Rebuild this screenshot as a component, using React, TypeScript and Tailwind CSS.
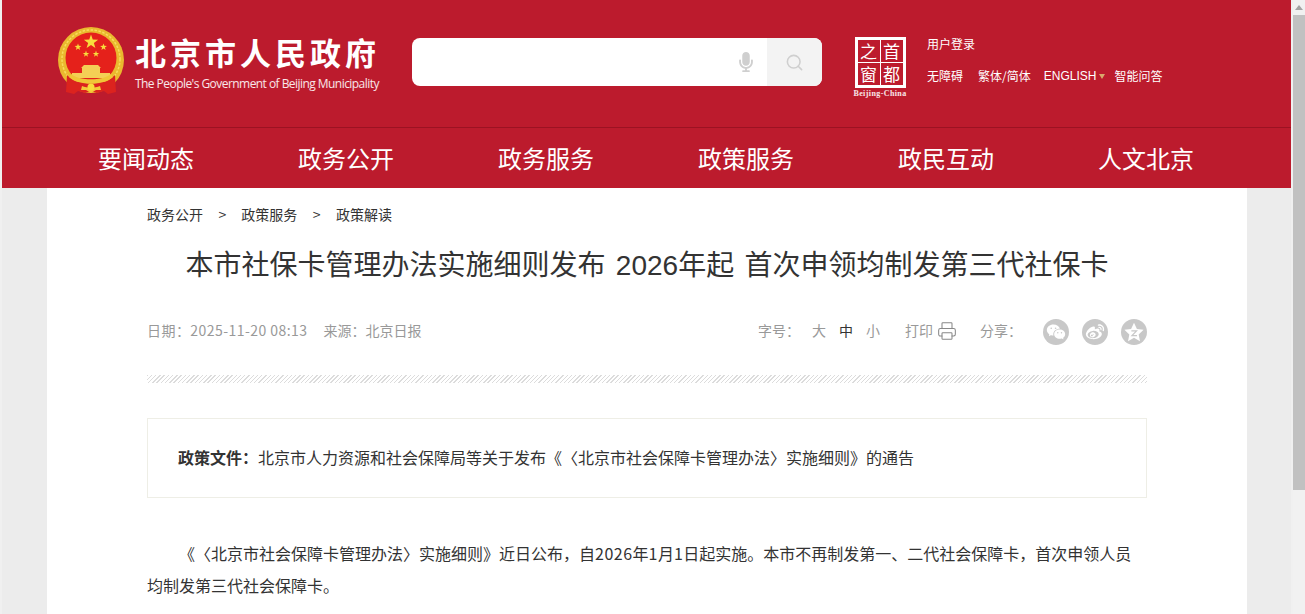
import type { ReactNode } from 'react';
import { Printer, Search } from 'lucide-react';
import { FaMicrophone } from 'react-icons/fa';
import { RiWechatFill, RiWeiboFill } from 'react-icons/ri';

const nav = ['要闻动态', '政务公开', '政务服务', '政策服务', '政民互动', '人文北京'];

function starPoints(cx: number, cy: number, r: number) {
  const pts: string[] = [];
  for (let i = 0; i < 10; i++) {
    const a = (Math.PI / 5) * i - Math.PI / 2;
    const d = i % 2 === 0 ? r : r * 0.4;
    pts.push(`${cx + d * Math.cos(a)},${cy + d * Math.sin(a)}`);
  }
  return pts.join(' ');
}

function Emblem() {
  return (
    <svg width="66" height="70" viewBox="0 0 66 70" className="shrink-0">
      <circle cx="33" cy="33" r="33" fill="#eab92e" />
      <circle cx="33" cy="32" r="29" fill="none" stroke="#f7dc5c" strokeWidth="1.5" strokeDasharray="2.5 1.5" />
      <circle cx="33" cy="31" r="25.5" fill="#e5211b" />
      <polygon points={starPoints(33, 15, 7.5)} fill="#f8dc3c" />
      <polygon points={starPoints(20, 20, 3.6)} fill="#f8dc3c" />
      <polygon points={starPoints(45.5, 20, 3.6)} fill="#f8dc3c" />
      <polygon points={starPoints(28, 27, 3.4)} fill="#f8dc3c" />
      <polygon points={starPoints(38, 27, 3.4)} fill="#f8dc3c" />
      <path d="M26 38h14l3 3H23z M24 41h18v5H24z M14 46h38v5H14z" fill="#f4cf55" />
      <path d="M9 48c3 3 7 6 11 7h26c4-1 8-4 11-7l1 17-8 2-4-3-7 2-6-2-6 2-7-2-4 3-8-2z" fill="#dc231e" />
      <path d="M13 47c8 7 32 7 40 0l2 3c-9 9-35 9-44 0z" fill="#f0c637" />
      <path d="M24 59c5 2 13 2 18 0l1 4-5 0-5 3-5-3-5 0z" fill="#f3c93a" />
      <circle cx="33" cy="60" r="3.5" fill="#f8dc3c" />
    </svg>
  );
}

function CapitalLogo() {
  return (
    <div className="flex flex-col items-center w-[56px] shrink-0">
      <div className="w-[51px] h-[51px] border-[3px] border-white grid grid-cols-2 grid-rows-2 gap-[1px] bg-white">
        {['之', '首', '窗', '都'].map((c) => (
          <span key={c} className="bg-[#bc1b2d] text-white text-[17px] leading-[22px] text-center">
            {c}
          </span>
        ))}
      </div>
      <span className="mt-[1px] text-[8px] leading-[9px] font-bold tracking-[0.4px] text-white/90 font-['Liberation_Serif',serif] whitespace-nowrap">
        Beijing-China
      </span>
    </div>
  );
}

function QzoneIcon() {
  return (
    <svg width="20" height="20" viewBox="0 0 24 24">
      <polygon points="12,1 15.5,8.4 23.5,9.4 17.6,14.9 19.2,23 12,19 4.8,23 6.4,14.9 0.5,9.4 8.5,8.4" fill="#fff" />
      <path d="M8.8 10.6h6.2l-5.4 5.6h6" fill="none" stroke="#c8c8c8" strokeWidth="1.5" />
    </svg>
  );
}

function ShareCircle({ children }: { children: ReactNode }) {
  return <span className="w-[26px] h-[26px] rounded-full bg-[#c8c8c8] flex items-center justify-center text-white">{children}</span>;
}

export default function App() {
  return (
    <div className="flex w-[1305px] h-[614px] overflow-hidden bg-[#f0f0f0] [text-spacing-trim:space-all] font-['Noto_Sans_CJK_SC','Liberation_Sans',sans-serif]">
      <div className="w-[1289px] ml-[2px] h-[614px] bg-[#ececec] shrink-0">
        <header className="bg-[#bc1b2d] text-white">
          <div className="h-[127px] flex items-start">
            <div className="ml-[56px] mt-[27px]">
              <Emblem />
            </div>
            <div className="ml-[11px] mt-[31px] w-[254px]">
              <div className="text-[31px] leading-[42px] font-bold tracking-[4px] whitespace-nowrap">北京市人民政府</div>
              <div className="text-[12px] leading-[18px] mt-[2px] whitespace-nowrap font-['Open_Sans','Liberation_Sans',sans-serif] tracking-[-0.55px] text-white/90">
                The People's Government of Beijing Municipality
              </div>
            </div>
            <div className="ml-[23px] mt-[38px] w-[410px] h-[48px] rounded-[8px] bg-white overflow-hidden flex justify-end">
              <div className="w-[42px] flex items-center justify-center text-[#cfcfcf]">
                <FaMicrophone size={20} />
              </div>
              <div className="w-[55px] bg-[#f3f3f3] flex items-center justify-center text-[#cfcfcf]">
                <Search size={19} strokeWidth={2} />
              </div>
            </div>
            <div className="ml-[30px] mt-[37px]">
              <CapitalLogo />
            </div>
            <div className="ml-[19px] mt-[35px] text-[12px] leading-[18px]">
              <div>用户登录</div>
              <div className="flex items-center mt-[14px] whitespace-nowrap">
                <span>无障碍</span>
                <span className="ml-[15px]">繁体/简体</span>
                <span className="ml-[13px] font-['Liberation_Sans',sans-serif]">ENGLISH</span>
                <span className="ml-[3px] w-0 h-0 border-x-[3px] border-x-transparent border-t-[5px] border-t-[#d9a86c]"></span>
                <span className="ml-[9px]">智能问答</span>
              </div>
            </div>
          </div>
          <nav className="h-[61px] border-t border-[#9c1222] flex items-center pl-[44px]">
            {nav.map((item) => (
              <a key={item} className="w-[200px] text-center text-[24px] leading-[60px]">
                {item}
              </a>
            ))}
          </nav>
        </header>
        <main className="ml-[45px] w-[1200px] h-[426px] bg-white px-[100px]">
          <div className="pt-[16px] flex items-center text-[14px] leading-[20px] text-[#333]">
            <span>政务公开</span>
            <span className="ml-[15.5px] mr-[15px]">&gt;</span>
            <span>政策服务</span>
            <span className="ml-[15.5px] mr-[15.5px]">&gt;</span>
            <span>政策解读</span>
          </div>
          <h1 className="mt-[21px] text-[28px] leading-[42px] text-center text-[#333] font-normal [word-spacing:2.5px] font-['Liberation_Sans','Noto_Sans_CJK_SC',sans-serif]">
            本市社保卡管理办法实施细则发布 2026年起 首次申领均制发第三代社保卡
          </h1>
          <div className="mt-[29px] h-[28px] flex items-center text-[14px] text-[#999]">
            <span className="tracking-[0.45px]">日期：2025-11-20 08:13</span>
            <span className="ml-[16px]">来源：北京日报</span>
            <div className="ml-auto flex items-center">
              <span>字号：</span>
              <span className="ml-[12px]">大</span>
              <span className="ml-[13px] text-[#333]">中</span>
              <span className="ml-[13px]">小</span>
              <span className="ml-[25px]">打印</span>
              <Printer size={20} strokeWidth={1.25} className="ml-[4px] mt-[2px] text-[#888]" />
              <span className="ml-[23px]">分享：</span>
              <div className="ml-[21px] mt-[4px] flex gap-[13px]">
                <ShareCircle><RiWechatFill size={20} /></ShareCircle>
                <ShareCircle><RiWeiboFill size={20} /></ShareCircle>
                <ShareCircle><QzoneIcon /></ShareCircle>
              </div>
            </div>
          </div>
          <div className="mt-[31px] h-[8px] bg-[repeating-linear-gradient(135deg,#dcdcdc_0,#dcdcdc_1px,#fff_1px,#fff_3px)]"></div>
          <div className="mt-[35px] h-[80px] border border-[#eeeee6] px-[30px] pb-[2px] flex items-center text-[16px] text-[#333]">
            <b className="font-bold">政策文件：</b>
            <span>北京市人力资源和社会保障局等关于发布《〈北京市社会保障卡管理办法〉实施细则》的通告</span>
          </div>
          <p className="mt-[39px] text-[16px] leading-[32px] text-[#333] indent-[32px]">
            《〈北京市社会保障卡管理办法〉实施细则》近日公布，自<span className="tracking-[0.5px]">2026</span>年<span className="tracking-[0.5px]">1</span>月<span className="tracking-[0.5px]">1</span>日起实施。本市不再制发第一、二代社会保障卡，首次申领人员<br />均制发第三代社会保障卡。
          </p>
        </main>
      </div>
      <div className="ml-[2px] w-[12px] h-[614px] bg-[#f1f1f1] flex flex-col items-center shrink-0">
        <div className="h-[15px] flex items-center">
          <span className="w-0 h-0 border-x-[4px] border-x-transparent border-b-[5px] border-b-[#a3a3a3]"></span>
        </div>
        <div className="w-[12px] h-[475px] bg-[#c1c1c1]"></div>
      </div>
    </div>
  );
}
